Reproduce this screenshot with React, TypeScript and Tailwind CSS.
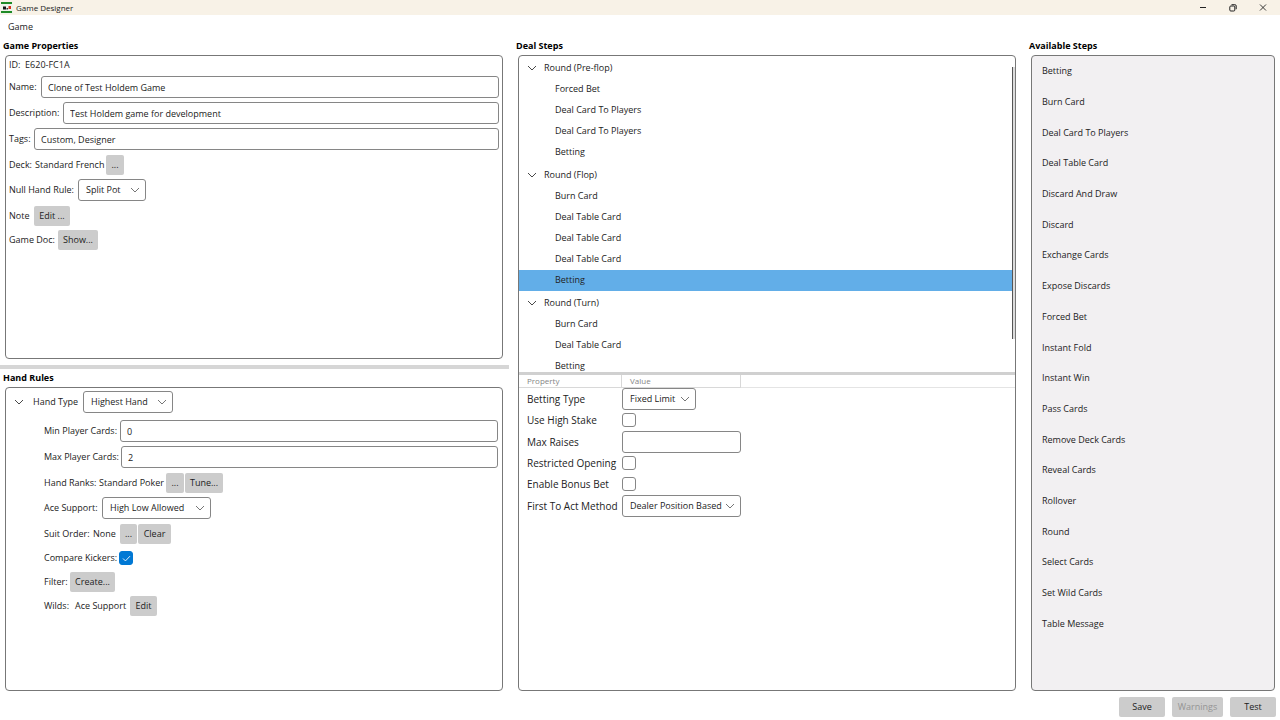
import { ReactNode, useId, useState } from "react";

interface Round {
  name: string;
  steps: string[];
}

const rounds: Round[] = [
  { name: "Round (Pre-flop)", steps: ["Forced Bet", "Deal Card To Players", "Deal Card To Players", "Betting"] },
  { name: "Round (Flop)", steps: ["Burn Card", "Deal Table Card", "Deal Table Card", "Deal Table Card", "Betting"] },
  { name: "Round (Turn)", steps: ["Burn Card", "Deal Table Card", "Betting"] },
];

const availableSteps = [
  "Betting",
  "Burn Card",
  "Deal Card To Players",
  "Deal Table Card",
  "Discard And Draw",
  "Discard",
  "Exchange Cards",
  "Expose Discards",
  "Forced Bet",
  "Instant Fold",
  "Instant Win",
  "Pass Cards",
  "Remove Deck Cards",
  "Reveal Cards",
  "Rollover",
  "Round",
  "Select Cards",
  "Set Wild Cards",
  "Table Message",
];

function Chevron({ className = "" }: { className?: string }) {
  return (
    <svg viewBox="0 0 10 6" className={`h-[6px] w-[10px] ${className}`} fill="none" stroke="currentColor" strokeWidth="0.9">
      <path d="M1 1l4 4 4-4" />
    </svg>
  );
}

function Button({ children, className = "", disabled }: { children: ReactNode; className?: string; disabled?: boolean }) {
  return (
    <button
      type="button"
      disabled={disabled}
      className={`h-5 shrink-0 rounded-[2px] bg-[#cccccc] text-center text-[#1c1c1c] disabled:text-[#949494] ${className}`}
    >
      {children}
    </button>
  );
}

function Select({ id, options, className = "" }: { id: string; options: string[]; className?: string }) {
  return (
    <span className={`grid h-[22px] shrink-0 items-center ${className}`}>
      <select
        id={id}
        className="col-start-1 row-start-1 h-full w-full appearance-none rounded-[3px] border border-[#868686] bg-white pl-[7px]"
      >
        {options.map((option) => (
          <option key={option}>{option}</option>
        ))}
      </select>
      <Chevron className="pointer-events-none col-start-1 row-start-1 mr-[6px] justify-self-end text-[#666]" />
    </span>
  );
}

function CheckBox({ id, defaultChecked = false }: { id: string; defaultChecked?: boolean }) {
  const [checked, setChecked] = useState(defaultChecked);
  return (
    <span className="grid size-[14px] items-center justify-items-center">
      <input
        id={id}
        type="checkbox"
        checked={checked}
        onChange={(e) => setChecked(e.target.checked)}
        className="col-start-1 row-start-1 size-[14px] appearance-none rounded-[3px] border border-[#868686] bg-white checked:border-[#0078d4] checked:bg-[#0078d4]"
      />
      {checked && (
        <svg viewBox="0 0 10 8" className="pointer-events-none col-start-1 row-start-1 h-[7px] w-[9px]" fill="none" stroke="white" strokeWidth="1">
          <path d="M1 4l2.800 2.800L9 1.300" />
        </svg>
      )}
    </span>
  );
}

function TextRow({ label, labelWidth, value }: { label: string; labelWidth: string; value: string }) {
  const id = useId();
  return (
    <div className="flex h-[22px] items-center">
      <label htmlFor={id} className={`shrink-0 whitespace-nowrap ${labelWidth}`}>
        {label}
      </label>
      <input
        id={id}
        type="text"
        defaultValue={value}
        className="h-full min-w-0 flex-1 rounded-[3px] border border-[#868686] bg-white px-[6px]"
      />
    </div>
  );
}

function Heading({ children }: { children: ReactNode }) {
  return <h2 className="h-[17px] shrink-0 text-[9px] leading-[15px] font-bold text-black">{children}</h2>;
}

function TitleBar() {
  return (
    <header className="flex h-[15px] shrink-0 items-center bg-[#f8f2e7] text-[#222]">
      <svg viewBox="0 0 12 12" className="ml-px size-3">
        <rect width="12" height="12" fill="#eef3ea" />
        <rect width="11" height="2" fill="#1f8a25" />
        <rect y="9" width="11" height="2" fill="#1f8a25" />
        <rect x="2" y="4.500" width="3" height="3" fill="#151515" />
        <rect x="5.500" y="6" width="1.500" height="1.500" fill="#333" />
        <rect x="7.500" y="4" width="2.500" height="3" fill="#d4311f" />
      </svg>
      <h1 className="ml-[3px] flex-1 text-[8px]">Game Designer</h1>
      <button type="button" aria-label="Minimize" className="flex w-[30px] justify-center">
        <svg viewBox="0 0 8 8" className="size-2" stroke="currentColor">
          <path d="M1 3.500h6" />
        </svg>
      </button>
      <button type="button" aria-label="Restore" className="flex w-[30px] justify-center">
        <svg viewBox="0 0 8 8" className="size-2" fill="none" stroke="currentColor">
          <rect x="0.800" y="2" width="5" height="5" rx="1" />
          <path d="M2.500 0.700h3.300A1.300 1.300 0 0 1 7.200 2v3.200" />
        </svg>
      </button>
      <button type="button" aria-label="Close" className="mr-[2px] flex w-[30px] justify-center">
        <svg viewBox="0 0 8 8" className="size-2" stroke="currentColor" strokeWidth="0.9">
          <path d="M1 0.500l6 6M7 0.500L1 6.500" />
        </svg>
      </button>
    </header>
  );
}

function GameProperties() {
  return (
    <div className="ml-[5px] flex min-h-0 flex-1 flex-col gap-1 overflow-hidden rounded-[4px] border border-[#777] pt-px pr-[3px] pl-[3px]">
      <p className="h-[15px] leading-[15px]">ID:&nbsp; E620-FC1A</p>
      <TextRow label="Name:" labelWidth="w-8" value="Clone of Test Holdem Game" />
      <TextRow label="Description:" labelWidth="w-[54px]" value="Test Holdem game for development" />
      <TextRow label="Tags:" labelWidth="w-[25px]" value="Custom, Designer" />
      <div className="flex h-[21px] items-center">
        <span className="w-[26px]">Deck:</span>
        <span className="w-[71px] whitespace-nowrap">Standard French</span>
        <Button className="w-[18px]">...</Button>
      </div>
      <div className="flex h-[22px] items-center">
        <label htmlFor="null-hand-rule" className="w-[69px] whitespace-nowrap">
          Null Hand Rule:
        </label>
        <Select id="null-hand-rule" options={["Split Pot"]} className="w-[68px]" />
      </div>
      <div className="flex h-[21px] items-center">
        <span className="w-[25px]">Note</span>
        <Button className="w-9">Edit ...</Button>
      </div>
      <div className="flex h-5 items-center">
        <span className="w-[49px] whitespace-nowrap">Game Doc:</span>
        <Button className="w-10">Show...</Button>
      </div>
    </div>
  );
}

function HandRules() {
  return (
    <div className="ml-[5px] min-h-0 flex-1 overflow-hidden rounded-[4px] border border-[#777] pt-[3px] pr-1">
      <div className="flex h-[22px] items-center pl-2">
        <button type="button" aria-label="Collapse" className="w-[19px]">
          <Chevron className="text-[#333]" />
        </button>
        <label htmlFor="hand-type" className="w-[50px] whitespace-nowrap">
          Hand Type
        </label>
        <Select id="hand-type" options={["Highest Hand"]} className="w-[90px]" />
      </div>
      <div className="mt-[7px] flex flex-col gap-1 pl-[38px]">
        <TextRow label="Min Player Cards:" labelWidth="w-[76px]" value="0" />
        <TextRow label="Max Player Cards:" labelWidth="w-[77px]" value="2" />
        <div className="flex h-[21px] items-center">
          <span className="w-[55px] whitespace-nowrap">Hand Ranks:</span>
          <span className="w-[67px] whitespace-nowrap">Standard Poker</span>
          <Button className="mr-px w-[18px]">...</Button>
          <Button className="w-[38px]">Tune...</Button>
        </div>
        <div className="flex h-[22px] items-center">
          <label htmlFor="ace-support" className="w-[58px] whitespace-nowrap">
            Ace Support:
          </label>
          <Select id="ace-support" options={["High Low Allowed"]} className="w-[109px]" />
        </div>
        <div className="flex h-[21px] items-center">
          <span className="w-[49px] whitespace-nowrap">Suit Order:</span>
          <span className="w-[27px]">None</span>
          <Button className="mr-px w-[17px]">...</Button>
          <Button className="w-[33px]">Clear</Button>
        </div>
        <div className="flex h-5 items-center">
          <label htmlFor="compare-kickers" className="w-[75px] whitespace-nowrap">
            Compare Kickers:
          </label>
          <CheckBox id="compare-kickers" defaultChecked />
        </div>
        <div className="flex h-5 items-center">
          <span className="w-[26px]">Filter:</span>
          <Button className="w-[45px]">Create...</Button>
        </div>
        <div className="flex h-5 items-center">
          <span className="w-[31px]">Wilds:</span>
          <span className="w-[55px] whitespace-nowrap">Ace Support</span>
          <Button className="w-[27px]">Edit</Button>
        </div>
      </div>
    </div>
  );
}

function StepTree() {
  const [selected, setSelected] = useState("1-4");

  return (
    <div className="flex min-h-0 flex-1">
      <ul className="min-w-0 flex-1 overflow-hidden pt-px">
        {rounds.map((round, r) => (
          <li key={round.name} className="pb-px">
            <div className="flex h-[22px] items-center pl-2">
              <button type="button" aria-label={`Collapse ${round.name}`} className="w-[17px]">
                <Chevron className="text-[#333]" />
              </button>
              {round.name}
            </div>
            <ul>
              {round.steps.map((step, s) => (
                <li
                  key={s}
                  onClick={() => setSelected(`${r}-${s}`)}
                  className={`h-[21px] pl-9 leading-5 ${selected === `${r}-${s}` ? "bg-[#62aee8]" : ""}`}
                >
                  {step}
                </li>
              ))}
            </ul>
          </li>
        ))}
      </ul>
      <div className="w-[3px] pt-[11px] pb-[33px]">
        <div className="h-full border-l border-[#555] bg-[#dcdcdc]" />
      </div>
    </div>
  );
}

function PropertyRow({ id, label, children, tall = false }: { id: string; label: string; children: ReactNode; tall?: boolean }) {
  return (
    <tr className={tall ? "h-[22px]" : "h-[21px]"}>
      <th scope="row" className="p-0 pl-2 text-left text-[10px] font-normal whitespace-nowrap">
        <label htmlFor={id}>{label}</label>
      </th>
      <td className="p-0">{children}</td>
      <td />
    </tr>
  );
}

function StepProperties() {
  return (
    <div className="min-h-0 flex-1">
      <table className="w-full table-fixed border-separate border-spacing-0">
        <colgroup>
          <col className="w-[103px]" />
          <col className="w-[119px]" />
          <col />
        </colgroup>
        <thead>
          <tr className="h-[13px] text-left text-[8px] leading-3 text-[#858585]">
            <th className="border-r border-b border-[#d8d8d8] p-0 pl-2 font-normal">Property</th>
            <th className="border-r border-b border-[#d8d8d8] p-0 pl-2 font-normal">Value</th>
            <td className="border-b border-[#e4e4e4] p-0" />
          </tr>
        </thead>
        <tbody>
          <PropertyRow id="betting-type" label="Betting Type" tall>
            <Select id="betting-type" options={["Fixed Limit"]} className="w-[74px]" />
          </PropertyRow>
          <PropertyRow id="high-stake" label="Use High Stake">
            <CheckBox id="high-stake" />
          </PropertyRow>
          <PropertyRow id="max-raises" label="Max Raises" tall>
            <input id="max-raises" type="text" className="block h-[22px] w-full rounded-[3px] border border-[#868686] px-[6px]" />
          </PropertyRow>
          <PropertyRow id="restricted-opening" label="Restricted Opening">
            <CheckBox id="restricted-opening" />
          </PropertyRow>
          <PropertyRow id="bonus-bet" label="Enable Bonus Bet">
            <CheckBox id="bonus-bet" />
          </PropertyRow>
          <PropertyRow id="first-to-act" label="First To Act Method" tall>
            <Select id="first-to-act" options={["Dealer Position Based"]} className="w-full" />
          </PropertyRow>
        </tbody>
      </table>
    </div>
  );
}

function App() {
  return (
    <div className="flex h-screen flex-col bg-white font-['Open_Sans','Noto_Sans',sans-serif] text-[9px] leading-3 text-[#222]">
      <TitleBar />
      <nav className="flex h-[23px] shrink-0 items-center pl-2">
        <button type="button">Game</button>
      </nav>

      <main className="grid min-h-0 flex-1 grid-cols-[513fr_513fr_254fr]">
        <section className="flex min-h-0 flex-col pr-1">
          <div className="mr-[6px] flex min-h-0 flex-1 flex-col pl-[3px]">
            <Heading>Game Properties</Heading>
            <div className="-ml-[3px] flex min-h-0 flex-1">
              <GameProperties />
            </div>
          </div>
          <div className="mt-[6px] mb-px h-1 shrink-0 bg-[#d6d6d6]" />
          <div className="mr-[6px] flex min-h-0 flex-1 flex-col pl-[3px]">
            <Heading>Hand Rules</Heading>
            <div className="-ml-[3px] flex min-h-0 flex-1">
              <HandRules />
            </div>
          </div>
        </section>

        <section className="flex min-h-0 flex-col pr-[10px] pl-[3px]">
          <Heading>Deal Steps</Heading>
          <div className="ml-[2px] flex min-h-0 flex-1 flex-col overflow-hidden rounded-[4px] border border-[#777]">
            <StepTree />
            <div className="h-[3px] shrink-0 bg-[#d0d0d0]" />
            <StepProperties />
          </div>
        </section>

        <section className="flex min-h-0 flex-col pr-[5px] pl-[3px]">
          <Heading>Available Steps</Heading>
          <ul className="ml-[2px] flex min-h-0 flex-1 flex-col rounded-[4px] border border-[#777] bg-[#f2f0f2] pb-[51px] pl-[10px]">
            {availableSteps.map((step) => (
              <li key={step} className="flex flex-1 items-center">
                {step}
              </li>
            ))}
          </ul>
        </section>
      </main>

      <footer className="flex h-[29px] shrink-0 items-center justify-end gap-[7px] pt-[3px] pr-1">
        <Button className="w-[46px]">Save</Button>
        <Button className="w-[51px]" disabled>
          Warnings
        </Button>
        <Button className="w-[46px]">Test</Button>
      </footer>
    </div>
  );
}

export default App;
